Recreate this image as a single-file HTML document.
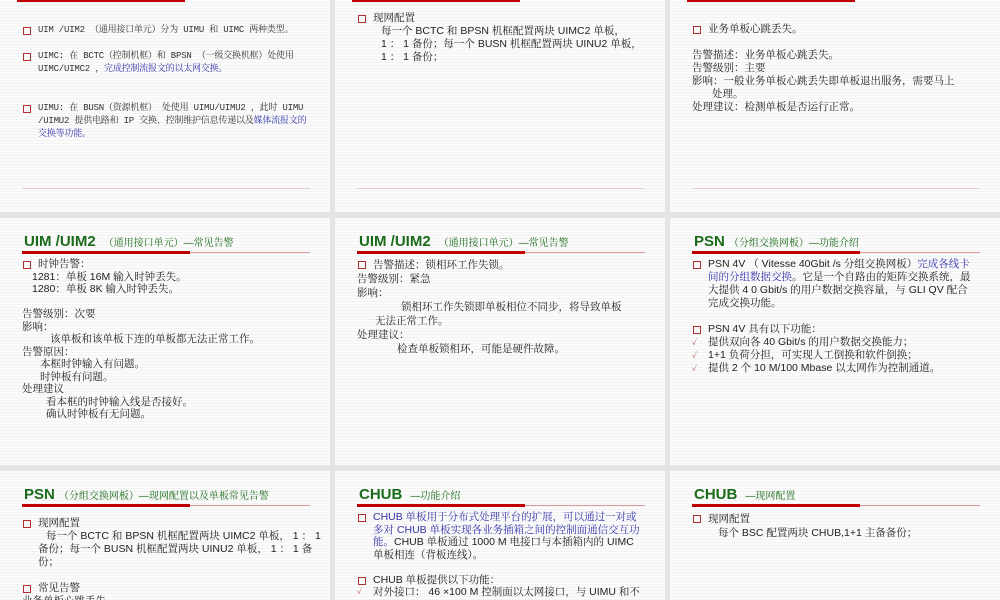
<!DOCTYPE html>
<html><head><meta charset="utf-8"><style>
*{margin:0;padding:0;box-sizing:border-box}
body{width:1000px;height:600px;background:#e4e4e4;position:relative;overflow:hidden;font-family:"Liberation Sans","Noto Serif CJK SC",serif;color:#222}
.s{position:absolute;background:repeating-linear-gradient(#fbfbfb 0 2px,#f3f3f3 2px 3px);overflow:hidden}
.t{position:absolute;left:24px;top:15px;font-size:15px;font-weight:bold;color:#1a6b1a;white-space:nowrap}
.t small{font-size:10px;font-weight:normal;margin-left:8px}
.bar{position:absolute;left:22px;top:33px;width:168px;height:3px;background:#c00000}
.thin{position:absolute;left:22px;top:34px;width:288px;height:1px;background:#d99}
.c{position:absolute;left:22px;font-size:10.5px;line-height:13px;width:280px}
.c p{margin:0}
.b{padding-left:16px;position:relative}
.b:before{content:"";position:absolute;left:1px;top:3px;width:6px;height:6px;border:1px solid #b03030}
.k{padding-left:16px;position:relative}
.k:before{content:"✓";position:absolute;left:0;top:0;color:#b03030;font-size:8px}
.bl{color:#3333aa}
.foot{position:absolute;left:22px;width:288px;height:1px;background:#e3cccc}
.serif{font-family:"Liberation Mono","Noto Serif CJK SC",serif;color:#333}
</style></head><body>

<!-- row 1 -->
<div class="s" style="left:0;top:0;width:330px;height:212px">
<div style="position:absolute;left:17px;top:0;width:168px;height:2px;background:#c00000"></div>
<div class="c serif" style="top:24px;font-size:9px;line-height:13px;width:292px;letter-spacing:-0.2px">
<p class="b">UIM /UIM2 （通用接口单元）分为 UIMU 和 UIMC 两种类型。</p><br>
<p class="b">UIMC: 在 BCTC（控制机框）和 BPSN （一级交换机框）处使用 UIMC/UIMC2 ，<span class="bl">完成控制流报文的以太网交换。</span></p><br><br>
<p class="b">UIMU: 在 BUSN（资源机框） 处使用 UIMU/UIMU2 ，此时 UIMU /UIMU2 提供电路和 IP 交换、控制维护信息传递以及<span class="bl">媒体流报文的交换等功能。</span></p>
</div>
<div class="foot" style="top:188px"></div>
</div>
<div class="s" style="left:335px;top:0;width:330px;height:212px">
<div style="position:absolute;left:17px;top:0;width:168px;height:2px;background:#c00000"></div>
<div class="c" style="top:12px;width:300px">
<p class="b">现网配置</p>
<p style="padding-left:24px">每一个 BCTC 和 BPSN 机框配置两块 UIMC2 单板，<br>1 ： 1 备份；每一个 BUSN 机框配置两块 UINU2 单板，<br>1 ： 1 备份；</p>
</div>
<div class="foot" style="top:188px"></div>
</div>
<div class="s" style="left:670px;top:0;width:330px;height:212px">
<div style="position:absolute;left:17px;top:0;width:168px;height:2px;background:#c00000"></div>
<div class="c" style="top:23px;width:300px">
<p class="b">业务单板心跳丢失。</p><br>
<p>告警描述：业务单板心跳丢失。</p>
<p>告警级别：主要</p>
<p>影响：一般业务单板心跳丢失即单板退出服务，需要马上</p><p style="padding-left:20px">处理。</p>
<p>处理建议：检测单板是否运行正常。</p>
</div>
<div class="foot" style="top:188px"></div>
</div>

<!-- row 2 -->
<div class="s" style="left:0;top:218px;width:330px;height:247px">
<div class="t">UIM /UIM2<small>（通用接口单元）—常见告警</small></div><div class="thin"></div><div class="bar"></div>
<div class="c" style="top:40px;line-height:12.5px;width:300px">
<p class="b">时钟告警：</p>
<p style="padding-left:10px">1281：单板 16M 输入时钟丢失。</p>
<p style="padding-left:10px">1280：单板 8K 输入时钟丢失。</p><br>
<p>告警级别：次要</p><p>影响：</p>
<p style="padding-left:28px">该单板和该单板下连的单板都无法正常工作。</p>
<p>告警原因：</p><p style="padding-left:18px">本框时钟输入有问题。</p><p style="padding-left:18px">时钟板有问题。</p>
<p>处理建议</p><p style="padding-left:24px">看本框的时钟输入线是否接好。</p><p style="padding-left:24px">确认时钟板有无问题。</p>
</div>
</div>
<div class="s" style="left:335px;top:218px;width:330px;height:247px">
<div class="t">UIM /UIM2<small>（通用接口单元）—常见告警</small></div><div class="thin"></div><div class="bar"></div>
<div class="c" style="top:40px;line-height:14px;width:300px">
<p class="b">告警描述：锁相环工作失锁。</p>
<p>告警级别：紧急</p><p>影响：</p>
<p style="padding-left:44px">锁相环工作失锁即单板相位不同步，将导致单板</p><p style="padding-left:18px">无法正常工作。</p>
<p>处理建议：</p><p style="padding-left:40px">检查单板锁相环，可能是硬件故障。</p>
</div>
</div>
<div class="s" style="left:670px;top:218px;width:330px;height:247px">
<div class="t">PSN<small style="margin-left:4px">（分组交换网板）—功能介绍</small></div><div class="thin"></div><div class="bar"></div>
<div class="c" style="top:40px;width:286px">
<p class="b">PSN 4V （ Vitesse 40Gbit /s 分组交换网板）<span class="bl">完成各线卡间的分组数据交换</span>。它是一个自路由的矩阵交换系统，最大提供 4 0 Gbit/s 的用户数据交换容量，与 GLI QV 配合完成交换功能。</p><br>
<p class="b">PSN 4V 具有以下功能：</p>
<p class="k">提供双向各 40 Gbit/s 的用户数据交换能力；</p>
<p class="k">1+1 负荷分担，可实现人工倒换和软件倒换；</p>
<p class="k">提供 2 个 10 M/100 Mbase 以太网作为控制通道。</p>
</div>
</div>

<!-- row 3 -->
<div class="s" style="left:0;top:471px;width:330px;height:129px">
<div class="t">PSN<small style="margin-left:4px">（分组交换网板）—现网配置以及单板常见告警</small></div><div class="thin"></div><div class="bar"></div>
<div class="c" style="top:46px;width:300px">
<p class="b">现网配置</p>
<p style="padding-left:24px">每一个 BCTC 和 BPSN 机框配置两块 UIMC2 单板， 1 ： 1</p><p style="padding-left:16px">备份；每一个 BUSN 机框配置两块 UINU2 单板， 1 ： 1 备份；</p><br>
<p class="b">常见告警</p><p>业务单板心跳丢失。</p>
</div>
</div>
<div class="s" style="left:335px;top:471px;width:330px;height:129px">
<div class="t">CHUB<small>—功能介绍</small></div><div class="thin"></div><div class="bar"></div>
<div class="c" style="top:40px;line-height:12.5px;width:286px">
<p class="b"><span class="bl">CHUB 单板用于分布式处理平台的扩展，可以通过一对或多对 CHUB 单板实现各业务插箱之间的控制面通信交互功能。</span>CHUB 单板通过 1000 M 电接口与本插箱内的 UIMC 单板相连（背板连线）。</p><br>
<p class="b">CHUB 单板提供以下功能：</p>
<p class="k">对外接口： 46 ×100 M 控制面以太网接口，与 UIMU 和不</p>
</div>
</div>
<div class="s" style="left:670px;top:471px;width:330px;height:129px">
<div class="t">CHUB<small>—现网配置</small></div><div class="thin"></div><div class="bar"></div>
<div class="c" style="top:41px;line-height:14px;width:300px">
<p class="b">现网配置</p>
<p style="padding-left:26px">每个 BSC 配置两块 CHUB,1+1 主备备份；</p>
</div>
</div>
</body></html>
